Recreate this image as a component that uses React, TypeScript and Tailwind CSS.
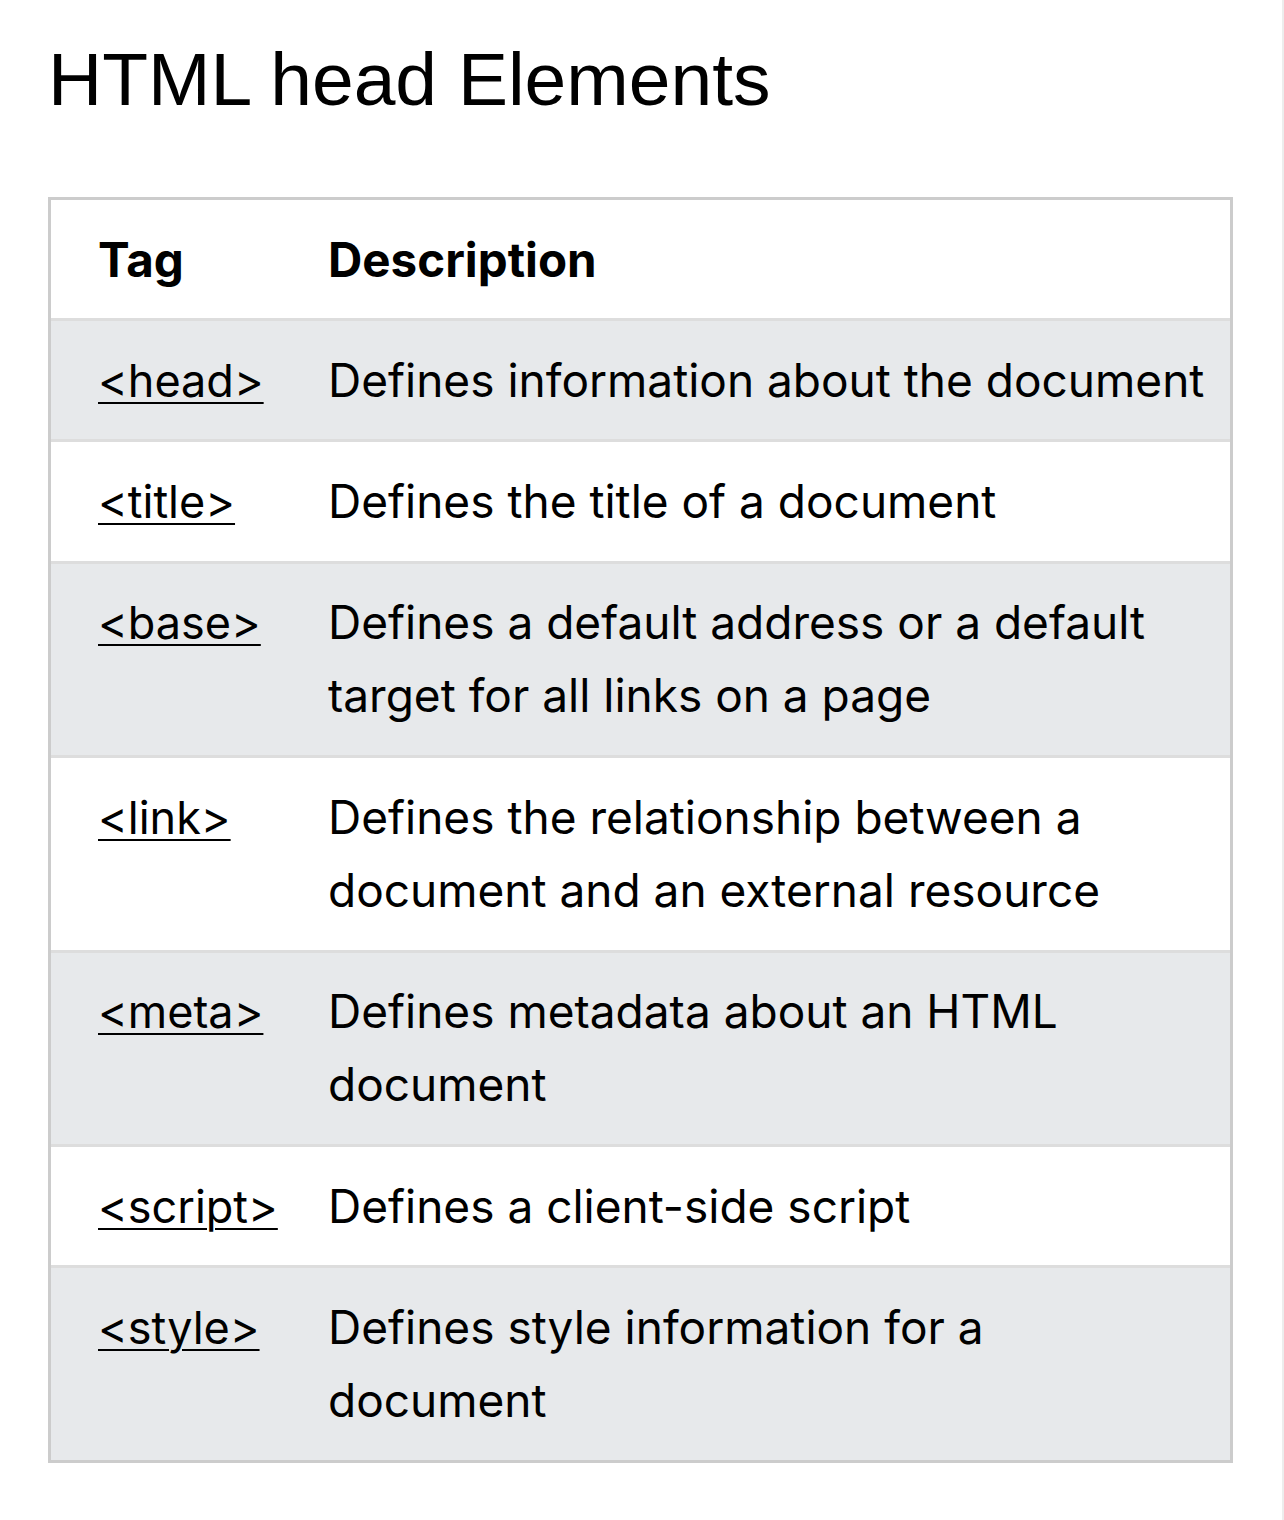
import React from "react";

const rows: { tag: string; desc: React.ReactNode }[] = [
  { tag: "<head>", desc: "Defines information about the document" },
  { tag: "<title>", desc: "Defines the title of a document" },
  { tag: "<base>", desc: <>Defines a default address or a default<br />target for all links on a page</> },
  { tag: "<link>", desc: <>Defines the relationship between a<br />document and an external resource</> },
  { tag: "<meta>", desc: <>Defines metadata about an HTML<br />document</> },
  { tag: "<script>", desc: "Defines a client-side script" },
  { tag: "<style>", desc: <>Defines style information for a<br />document</> },
];

const App = () => {
  return (
    <div className="w-[1284px] min-h-[1520px] bg-white pl-12 pr-[49px] pt-[42px] border-r-2 border-[#ededed]">
      {/* Page heading */}
      <h1 className="text-[75px] leading-none font-normal text-black font-['Liberation_Sans',Arial,sans-serif]">
        HTML head Elements
      </h1>

      {/* Table */}
      <div className="mt-[80px] border-[3px] border-[#cccccc] font-['Inter','Noto_Sans',sans-serif] text-black">
        {/* Header row */}
        <div className="flex bg-white">
          <div className="w-[277px] shrink-0 pl-[47px] py-[22.5px] text-[47.5px] leading-[73px] font-bold">Tag</div>
          <div className="flex-1 py-[22.5px] pr-6 text-[47.5px] leading-[73px] font-bold">Description</div>
        </div>

        {rows.map((r, i) => (
          <div
            key={r.tag}
            className={`flex border-t-[3px] border-[#dddddd] ${i % 2 === 0 ? "bg-[#e7e9eb]" : "bg-white"}`}
          >
            <div className="w-[277px] shrink-0 pl-[47px] py-[22.5px] text-[45px] leading-[73.25px]">
              <span className="underline decoration-2 underline-offset-[5px] cursor-pointer">{r.tag}</span>
            </div>
            <div className="flex-1 py-[22.5px] pr-6 text-[46px] leading-[73.25px] whitespace-nowrap">{r.desc}</div>
          </div>
        ))}
      </div>
    </div>
  );
};

export default App;
